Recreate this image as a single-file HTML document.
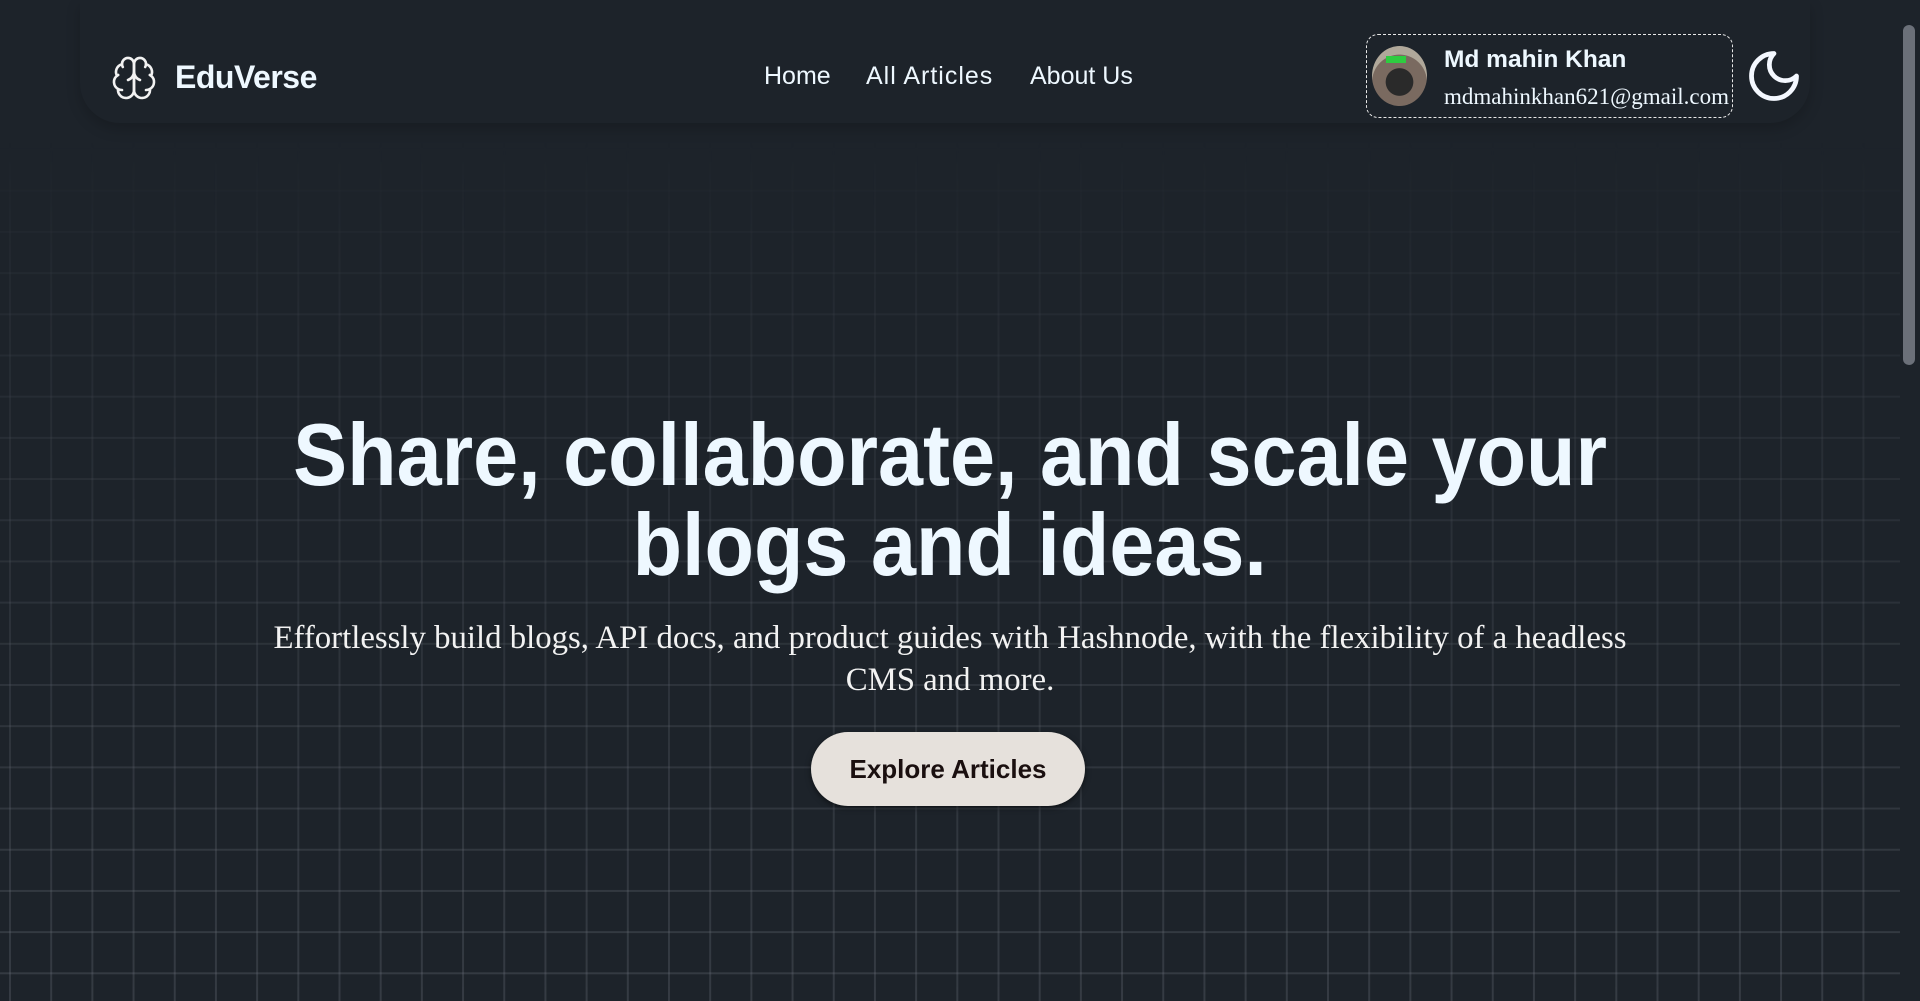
<!DOCTYPE html>
<html><head><meta charset="utf-8">
<style>
*{margin:0;padding:0;box-sizing:border-box}
html,body{width:1920px;height:1001px;overflow:hidden;background:#1d232a;font-family:"Liberation Sans",sans-serif;color:#eef8ff}
.grid{position:absolute;left:0;top:0;width:1900px;height:1001px;
background-image:linear-gradient(to right,rgba(110,115,125,.3) 2px,transparent 2px),linear-gradient(to bottom,rgba(110,115,125,.3) 2px,transparent 2px);
background-size:41.2px 41.2px;background-position:9px 25px;
-webkit-mask-image:linear-gradient(to bottom,transparent 140px,rgba(0,0,0,.3) 300px,rgba(0,0,0,1) 1001px);
mask-image:linear-gradient(to bottom,transparent 140px,rgba(0,0,0,.3) 300px,rgba(0,0,0,1) 1001px)}
.nav{position:absolute;left:80px;top:0;width:1730px;height:123px;border-radius:0 0 40px 40px;background:#1d232a;box-shadow:0 6px 14px rgba(0,0,0,.18)}
.logo{position:absolute;left:110px;top:54px}
.brand{position:absolute;left:175px;top:59px;font-size:32px;font-weight:bold;letter-spacing:-0.5px}
.links a{position:absolute;top:62px;font-size:25px;color:#eef8ff;text-decoration:none}
.prof{position:absolute;left:1366px;top:34px;width:367px;height:84px;border:1.5px dashed #e8e8e8;border-radius:12px}
.av{position:absolute;left:5px;top:11px;width:55px;height:60px;border-radius:50%;background:radial-gradient(circle at 50% 60%,#2a2a2a 0 30%,#7a6a60 31% 60%,#b0a89a 61%);overflow:hidden}
.name{position:absolute;left:77px;top:11px;font-size:24.5px;font-weight:bold}
.mail{position:absolute;left:77px;top:49px;font-family:"Liberation Serif",serif;font-size:23px}
h1{position:absolute;left:0;width:1900px;text-align:center;font-size:88px;font-weight:bold;line-height:90px;top:410px;color:#eef8ff}
h1 span{display:inline-block;transform:scaleX(.92);white-space:nowrap}
.sub{position:absolute;left:0;width:1900px;text-align:center;top:617px;font-family:"Liberation Serif",serif;font-size:32.8px;line-height:42px;color:#f2f2f2}
.btn{position:absolute;left:811px;top:732px;width:274px;height:74px;border-radius:37px;background:#e6e1dc;color:#1a0f0f;font-size:26px;font-weight:bold;text-align:center;line-height:74px;box-shadow:0 2px 6px rgba(0,0,0,.5)}
.sb{position:absolute;right:0;top:0;width:20px;height:1001px;background:#1d232a}
.th{position:absolute;left:3px;top:25px;width:12px;height:340px;border-radius:6px;background:#6b7079}
</style></head><body>
<div class="grid"></div>
<div class="nav"></div>
<svg class="logo" width="48" height="48" viewBox="0 0 24 24" fill="none" stroke="#f2f2f2" stroke-width="1.3" stroke-linecap="round" stroke-linejoin="round"><path d="M12 5a3 3 0 1 0-5.997.125 4 4 0 0 0-2.526 5.77 4 4 0 0 0 .556 6.588A4 4 0 1 0 12 18Z"/><path d="M12 5a3 3 0 1 1 5.997.125 4 4 0 0 1 2.526 5.77 4 4 0 0 1-.556 6.588A4 4 0 1 1 12 18Z"/><path d="M15 13a4.5 4.5 0 0 1-3-4 4.5 4.5 0 0 1-3 4"/><path d="M17.6 6.5a3 3 0 0 0 .4-1.4"/><path d="M6 5.1a3 3 0 0 0 .4 1.4"/><path d="M3.5 10.9a4 4 0 0 1 .6-.4"/><path d="M19.9 10.5a4 4 0 0 1 .6.4"/><path d="M6 18a4 4 0 0 1-2-.5"/><path d="M20 17.5a4 4 0 0 1-2 .5"/></svg>
<div class="brand">EduVerse</div>
<div class="links"><a style="left:764px">Home</a><a style="left:866px;letter-spacing:1px">All Articles</a><a style="left:1030px">About Us</a></div>
<div class="prof"><div class="av"><div style="position:absolute;left:14px;top:10px;width:20px;height:7px;background:#2ecc40"></div></div><div class="name">Md mahin Khan</div><div class="mail">mdmahinkhan621@gmail.com</div></div>
<svg style="position:absolute;left:1744px;top:46px" width="60" height="60" viewBox="0 0 24 24" fill="none" stroke="#f4f8ff" stroke-width="1.9" stroke-linecap="round" stroke-linejoin="round"><path d="M12 3a6 6 0 0 0 9 9 9 9 0 1 1-9-9Z"/></svg>
<h1><span>Share, collaborate, and scale your</span><br><span>blogs and ideas.</span></h1>
<div class="sub">Effortlessly build blogs, API docs, and product guides with Hashnode, with the flexibility of a headless<br>CMS and more.</div>
<div class="btn">Explore Articles</div>
<div class="sb"><div class="th"></div></div>
</body></html>
